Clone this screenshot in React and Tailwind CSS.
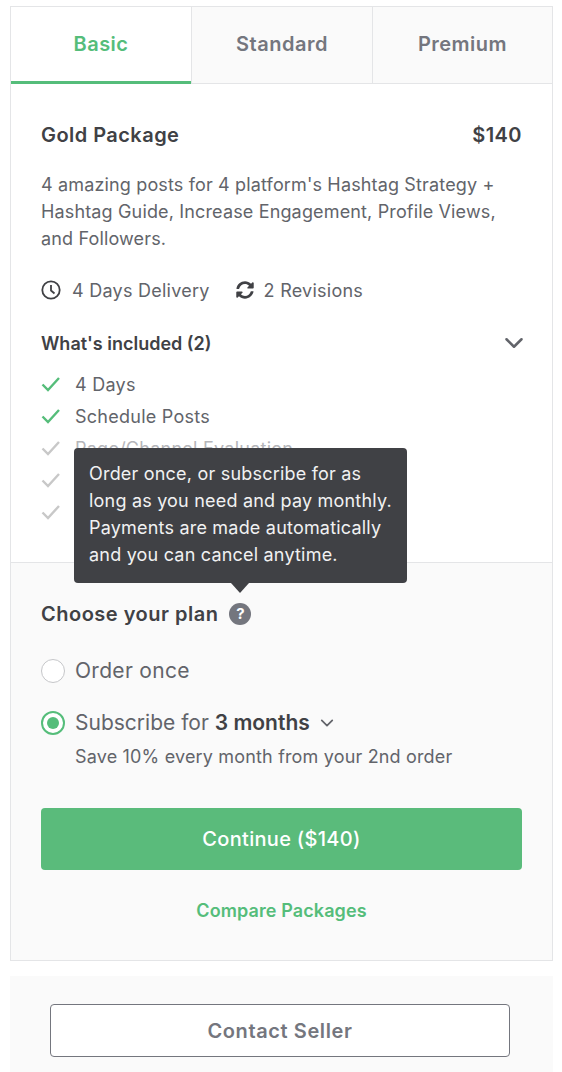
import React from "react";

const Check = ({ on }) => (
  <svg width="20" height="16" viewBox="0 0 20 16" fill="none" className="shrink-0">
    <path d="M1.5 8.5 L7 14 L18 2" stroke={on ? "#55bd7a" : "#c8c8c8"} strokeWidth="2.4" />
  </svg>
);

const Chevron = ({ size, w }) => (
  <svg width={size} height={size} viewBox="0 0 16 16" fill="none">
    <path d="M2 5 L8 11 L14 5" stroke="#62646a" strokeWidth={w} strokeLinecap="round" strokeLinejoin="round" />
  </svg>
);

const items = [
  ["4 Days", true],
  ["Schedule Posts", true],
  ["Page/Channel Evaluation", false],
  ["", false],
  ["", false],
];

export default function App() {
  return (
    <div className="w-[562px] h-[1072px] overflow-hidden bg-white pt-[6px] pl-[10px] font-['Inter','Liberation_Sans',sans-serif] text-[#62646a]">
      <div className="w-[543px] border border-[#e4e5e7] relative">
        <div className="flex h-[77px] border-b border-[#e4e5e7] text-[20px] font-semibold tracking-[0.5px]">
          <div className="w-[180px] -mb-px border-b-[3px] border-[#55bd7a] flex items-center justify-center text-[#55bd7a] bg-white">Basic</div>
          <div className="w-[181px] border-l border-[#e4e5e7] bg-[#fafafa] flex items-center justify-center pb-[2px] text-[#74767e]">Standard</div>
          <div className="flex-1 border-l border-[#e4e5e7] bg-[#fafafa] flex items-center justify-center pb-[2px] text-[#74767e]">Premium</div>
        </div>

        <div className="h-[478px] pt-[38px] px-[30px] overflow-hidden">
          <div className="flex justify-between items-center h-[26px] text-[20px] font-semibold text-[#404145] tracking-[0.45px]">
            <span>Gold Package</span>
            <span>$140</span>
          </div>
          <p className="mt-[23px] text-[18px] leading-[27px] tracking-[0.15px]">4 amazing posts for 4 platform's Hashtag Strategy + Hashtag Guide, Increase Engagement, Profile Views, and Followers.</p>
          <div className="mt-[25px] flex items-center h-[26px] text-[18px] tracking-[0.25px]">
            <svg width="20" height="20" viewBox="0 0 20 20" fill="none" className="mr-[11px]">
              <circle cx="10" cy="10" r="8.7" stroke="#404145" strokeWidth="1.8" />
              <path d="M10 5 V10.5 L13.5 13.5" stroke="#404145" strokeWidth="1.8" />
            </svg>
            <span>4 Days Delivery</span>
            <svg width="18" height="18" viewBox="0 0 512 512" fill="#404145" className="ml-[26px] mr-[10px]">
              <path d="M370.7 133.3C339.5 104 298.9 88 255.8 88c-77.5.1-144.3 53.2-162.8 126.9-1.3 5.4-6.1 9.2-11.7 9.2H24.1c-7.5 0-13.2-6.8-11.8-14.2C33.9 94.9 134.8 8 256 8c66.4 0 126.8 26.1 171.3 68.7L463 41c15.1-15.1 41-4.4 41 17V192c0 13.3-10.7 24-24 24H345.9c-21.4 0-32.1-25.9-17-41l41.8-41.7zM32 296h134.1c21.4 0 32.1 25.9 17 41l-41.8 41.8c31.3 29.3 71.8 45.3 114.9 45.2 77.4-.1 144.3-53.1 162.8-126.8 1.3-5.4 6.1-9.2 11.7-9.2h57.3c7.5 0 13.2 6.8 11.8 14.2C478.1 417.1 377.2 504 256 504c-66.4 0-126.8-26.1-171.3-68.7L49 471c-15.1 15.1-41 4.4-41-17V320c0-13.3 10.7-24 24-24z" />
            </svg>
            <span>2 Revisions</span>
          </div>
          <div className="mt-[27px] flex justify-between items-center h-[26px]">
            <span className="text-[18px] font-semibold text-[#404145]">What's included (2)</span>
            <span className="mr-[-2px]"><Chevron size={20} w={2} /></span>
          </div>
          <ul className="mt-[12px]">
            {items.map(([t, on], i) => (
              <li key={i} className={`flex items-center h-[32px] text-[18px] tracking-[0.25px] ${on ? "" : "text-[#b5b6ba]"}`}>
                <span className="w-[34px]"><Check on={on} /></span>
                {t}
              </li>
            ))}
          </ul>
        </div>

        <div className="h-[398px] border-t border-[#e4e5e7] bg-[#fafafa] px-[30px] pt-[37px]">
          <div className="flex items-center h-[28px]">
            <span className="text-[20px] font-semibold text-[#404145] tracking-[0.5px]">Choose your plan</span>
            <span className="ml-[11px] w-[22px] h-[22px] rounded-full bg-[#74767e] text-white text-[15px] font-bold flex items-center justify-center">?</span>
          </div>
          <div className="mt-[29px] flex items-center h-[28px] text-[21px] tracking-[0.3px]">
            <span className="w-[24px] h-[24px] rounded-full border border-[#c5c6c9] bg-white mr-[10px]" />
            Order once
          </div>
          <div className="mt-[24px] flex items-center h-[28px] text-[21px]">
            <span className="w-[24px] h-[24px] rounded-full border-2 border-[#55bd7a] bg-white mr-[10px] flex items-center justify-center">
              <span className="w-[12px] h-[12px] rounded-full bg-[#55bd7a]" />
            </span>
            Subscribe for&nbsp;<b className="font-semibold text-[#404145]">3 months</b>
            <span className="ml-[10px]"><Chevron size={14} w={2} /></span>
          </div>
          <p className="mt-[7px] ml-[34px] text-[18px] leading-[26px] tracking-[0.17px]">Save 10% every month from your 2nd order</p>
          <div className="mt-[38px] h-[62px] rounded-[4px] bg-[#5abb7b] flex items-center justify-center text-white text-[20px] font-medium tracking-[0.3px]">Continue ($140)</div>
          <div className="mt-[27px] text-center text-[#55bd7a] text-[18px] font-semibold tracking-[0.1px]">Compare Packages</div>
        </div>

        <div className="absolute left-[63px] top-[441px] w-[333px] h-[135px] rounded-[4px] bg-[#404145] px-[15px] pt-[12px] text-[18px] leading-[27px] tracking-[0.2px] text-[#f1f1f2]">
          <p>Order once, or subscribe for as long as you need and pay monthly. Payments are made automatically and you can cancel anytime.</p>
          <span className="absolute left-[157px] top-[135px] border-x-[9px] border-x-transparent border-t-[10px] border-t-[#404145]" />
        </div>
      </div>

      <div className="mt-[15px] w-[543px] h-[96px] bg-[#fafafa] pt-[28px] pl-[40px] pr-[43px]">
        <div className="h-[53px] rounded-[4px] border border-[#74767e] bg-white flex items-center justify-center text-[20px] font-semibold text-[#74767e] tracking-[0.6px]">Contact Seller</div>
      </div>
    </div>
  );
}
